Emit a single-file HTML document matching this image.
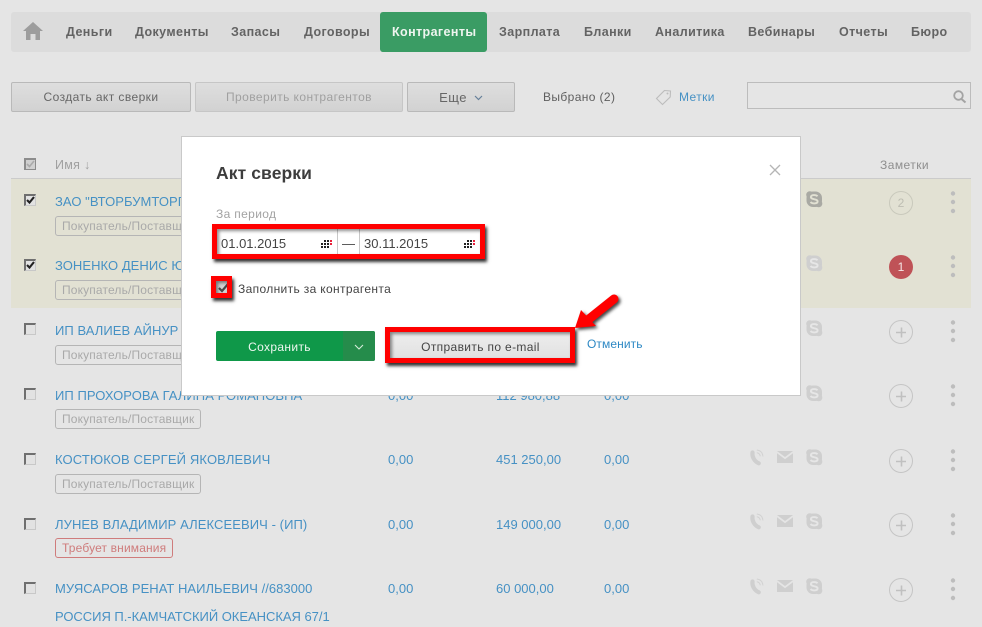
<!DOCTYPE html>
<html lang="ru">
<head>
<meta charset="utf-8">
<style>
html,body{margin:0;padding:0}
body{width:982px;height:627px;overflow:hidden;position:relative;background:#e5e5e5;font-family:"Liberation Sans","DejaVu Sans",sans-serif;font-size:12px;color:#555}
.a,body>div,.modal div{position:absolute;white-space:nowrap}
.nav{left:11px;top:12px;width:960px;height:40px;background:#dcdcdc;border-radius:3px}
.n{top:25px;font-weight:bold;font-size:12.5px;line-height:14px;color:#636363;letter-spacing:.4px}
.active{left:380px;top:12px;width:107px;height:40px;background:#3a9c64;border-radius:3px}
.btn{top:82px;height:30px;box-sizing:border-box;border:1px solid #b9b9b9;border-radius:2px;background:linear-gradient(#dedede,#d2d2d2);text-align:center;line-height:29px;letter-spacing:.42px;color:#666}
.name{left:55px;color:#4691c4;font-size:13px;line-height:15px;letter-spacing:.05px}
.tag{left:55px;height:20px;box-sizing:border-box;border:1px solid #b5b5b5;border-radius:3px;color:#a9a9a9;font-size:12px;line-height:19px;padding:0 6px;letter-spacing:.15px}
.tag.r{border-color:#cf7c7c;color:#cf7c7c}
.amt{color:#4691c4;font-size:13px;line-height:14px;margin-top:1px}
.cb{left:24px;width:12px;height:12px;box-sizing:border-box;border:1px solid #c8c8c8;border-top:2px solid #6f6f6f;border-left:2px solid #6f6f6f;background:#e2e2e2}
.sel{left:11px;top:179px;width:960px;height:129px;background:#e2e1d3}
.line{left:11px;top:178px;width:960px;height:1px;background:#cbcbcb}
.modal{left:181px;top:136px;width:620px;height:260px;box-sizing:border-box;background:#fff;border:1px solid #c9c9c9;z-index:5}
.in{left:1px;top:0;width:0;height:0}
.red{box-sizing:border-box;border:5px solid #f00;box-shadow:2px 3px 3px #333,inset 2px 2px 3px rgba(0,0,0,.45);z-index:7}
svg{display:block;overflow:visible}
</style>
</head>
<body>
<svg width="0" height="0" style="position:absolute">
<defs>
<g id="phone"><path d="M3.500 3.500C2.800 7.500 5.200 12.300 9.800 14.300" fill="none" stroke="#cfcfcf" stroke-width="4.200" stroke-linecap="round"/><path d="M7.800 1c3.500.4 5.800 2.800 6.200 6.500M7.800 3.800c2 .3 3.200 1.500 3.500 3.500" fill="none" stroke="#d2d2d2" stroke-width="1"/></g>
<g id="mail"><path d="M0 0h16L8 6z M0 2.200l8 6 8-6V12H0z" fill="#cfcfcf"/></g>
<g id="sk"><rect x="0.500" y="0.500" width="15.500" height="15.500" rx="6.500" fill="#cfcfcf"/><circle cx="3.800" cy="3.800" r="3.600" fill="#cfcfcf"/><circle cx="12.700" cy="12.700" r="3.600" fill="#cfcfcf"/><path d="M11.500 5.300C10 3.500 5 3.500 4.900 6 4.800 8.900 11.700 7.600 11.600 10.500 11.400 13 6 12.900 4.600 10.900" fill="none" stroke="#e6e6e6" stroke-width="1.900"/></g>
<g id="skd"><rect x="0.500" y="0.500" width="15.500" height="15.500" rx="6.500" fill="#a9a9a3"/><circle cx="3.800" cy="3.800" r="3.600" fill="#a9a9a3"/><circle cx="12.700" cy="12.700" r="3.600" fill="#a9a9a3"/><path d="M11.500 5.300C10 3.500 5 3.500 4.900 6 4.800 8.900 11.700 7.600 11.600 10.500 11.400 13 6 12.900 4.600 10.900" fill="none" stroke="#e2e1d3" stroke-width="1.900"/></g>
<g id="plus"><circle cx="12" cy="12" r="11.500" fill="none" stroke="#c5c5c5" stroke-width="1"/><path d="M7 12.500h10M12.500 7.500v10" stroke="#c0c0c0" stroke-width="1.600"/></g>
<g id="dots"><circle cx="2" cy="2.500" r="2.200" fill="#bdbdbd"/><circle cx="2" cy="11" r="2.200" fill="#bdbdbd"/><circle cx="2" cy="20" r="2.200" fill="#bdbdbd"/></g>
<g id="cal"><path d="M0 2h2v2H0zM3 2h2v2H3zM6 2h2v2H6zM0 5h2v2H0zM3 5h2v2H3zM6 5h2v2H6zM3 -1h2v2H3zM6 -1h2v2H6z" fill="#222"/><path d="M9 -1h2v2H9zM9 2h2v2H9z" fill="#e8203a"/></g>
</defs>
</svg>

<div class="nav"></div>
<div class="active"></div>
<svg class="a" style="left:23px;top:22px" width="20" height="18"><path d="M10 0L20 9h-3v9h-4.500v-6h-5v6H3V9H0z" fill="#9d9d9d"/></svg>
<div class="n" style="left:66px">Деньги</div>
<div class="n" style="left:135px">Документы</div>
<div class="n" style="left:231px">Запасы</div>
<div class="n" style="left:304px">Договоры</div>
<div class="n" style="left:392px;color:#eef5ef">Контрагенты</div>
<div class="n" style="left:499px">Зарплата</div>
<div class="n" style="left:584px">Бланки</div>
<div class="n" style="left:655px">Аналитика</div>
<div class="n" style="left:748px">Вебинары</div>
<div class="n" style="left:839px">Отчеты</div>
<div class="n" style="left:911px">Бюро</div>

<div class="btn" style="left:11px;width:180px">Создать акт сверки</div>
<div class="btn" style="left:195px;width:208px;color:#a0a0a0;border-color:#c6c6c6">Проверить контрагентов</div>
<div class="btn" style="left:407px;width:108px;padding-right:16px;font-size:13px">Еще</div>
<svg class="a" style="left:474px;top:95px" width="9" height="6"><path d="M1 1l3.500 3.500L8 1" fill="none" stroke="#66809a" stroke-width="1.200"/></svg>
<div style="left:543px;top:90px;line-height:14px;color:#5f5f5f;letter-spacing:.38px">Выбрано (2)</div>
<svg class="a" style="left:655px;top:89px" width="17" height="17"><path d="M9.500 1.500l6 .5-.3 6-7.700 7.500-6-6z" fill="none" stroke="#bcbcbc" stroke-width="1.100"/><circle cx="12.500" cy="4.500" r="1" fill="#bcbcbc"/></svg>
<div style="left:679px;top:90px;line-height:14px;color:#4691c4;letter-spacing:.4px">Метки</div>
<div style="left:747px;top:82px;width:224px;height:27px;box-sizing:border-box;border:1px solid #bcbcbc"></div>
<svg class="a" style="left:953px;top:90px" width="14" height="14"><circle cx="5.500" cy="5.500" r="4.300" fill="none" stroke="#a3a3a3" stroke-width="1.800"/><path d="M8.500 9l4 3.500" stroke="#a3a3a3" stroke-width="2"/></svg>

<div class="cb" style="top:158px;background:#d0d0d0;border-color:#8c8c8c"></div>
<svg class="a" style="left:26px;top:160px" width="9" height="8"><path d="M1 4l2.500 2.500L8 1" fill="none" stroke="#aaa" stroke-width="1.600"/></svg>
<div style="left:55px;top:158px;line-height:15px;color:#a0a0a0;letter-spacing:.3px;font-size:12.500px">Имя ↓</div>
<div style="left:880px;top:158px;line-height:15px;color:#8e8e8e;letter-spacing:.45px">Заметки</div>
<div class="line"></div>
<div class="sel"></div>

<!-- checkboxes -->
<div class="cb" style="top:194px"></div>
<svg class="a" style="left:26px;top:196px" width="9" height="8"><path d="M1 4l2.500 2.500L8 1" fill="none" stroke="#222" stroke-width="2.100"/></svg>
<div class="cb" style="top:259px"></div>
<svg class="a" style="left:26px;top:261px" width="9" height="8"><path d="M1 4l2.500 2.500L8 1" fill="none" stroke="#222" stroke-width="2.100"/></svg>
<div class="cb" style="top:323px"></div>
<div class="cb" style="top:388px"></div>
<div class="cb" style="top:453px"></div>
<div class="cb" style="top:518px"></div>
<div class="cb" style="top:582px"></div>

<!-- names -->
<div class="name" style="top:194px">ЗАО "ВТОРБУМТОРГ"</div>
<div class="tag" style="top:216px">Покупатель/Поставщик</div>
<div class="name" style="top:258px">ЗОНЕНКО ДЕНИС ЮРЬЕВИЧ</div>
<div class="tag" style="top:280px">Покупатель/Поставщик</div>
<div class="name" style="top:323px">ИП ВАЛИЕВ АЙНУР</div>
<div class="tag" style="top:345px">Покупатель/Поставщик</div>
<div class="name" style="top:388px">ИП ПРОХОРОВА ГАЛИНА РОМАНОВНА</div>
<div class="tag" style="top:409px">Покупатель/Поставщик</div>
<div class="name" style="top:452px;letter-spacing:.13px">КОСТЮКОВ СЕРГЕЙ ЯКОВЛЕВИЧ</div>
<div class="tag" style="top:474px">Покупатель/Поставщик</div>
<div class="name" style="top:517px;letter-spacing:.08px">ЛУНЕВ ВЛАДИМИР АЛЕКСЕЕВИЧ - (ИП)</div>
<div class="tag r" style="top:538px">Требует внимания</div>
<div class="name" style="top:581px;letter-spacing:.02px">МУЯСАРОВ РЕНАТ НАИЛЬЕВИЧ //683000</div>
<div class="name" style="top:609px;letter-spacing:-.03px">РОССИЯ П.-КАМЧАТСКИЙ ОКЕАНСКАЯ 67/1</div>

<!-- amounts -->
<div class="amt" style="left:388px;top:388px">0,00</div><div class="amt" style="left:496px;top:388px">112 980,88</div><div class="amt" style="left:604px;top:388px">0,00</div>
<div class="amt" style="left:388px;top:452px">0,00</div><div class="amt" style="left:496px;top:452px">451 250,00</div><div class="amt" style="left:604px;top:452px">0,00</div>
<div class="amt" style="left:388px;top:517px">0,00</div><div class="amt" style="left:496px;top:517px">149 000,00</div><div class="amt" style="left:604px;top:517px">0,00</div>
<div class="amt" style="left:388px;top:581px">0,00</div><div class="amt" style="left:496px;top:581px">60 000,00</div><div class="amt" style="left:604px;top:581px">0,00</div>

<!-- row icons -->
<svg class="a" style="left:0;top:0" width="982" height="627">
<g transform="translate(806,191)"><use href="#skd"/></g>
<g transform="translate(806,255)"><use href="#sk"/></g>
<g transform="translate(806,320)"><use href="#sk"/></g>
<g transform="translate(806,385)"><use href="#sk"/></g>
<g transform="translate(749,449)"><use href="#phone"/></g><g transform="translate(777,451)"><use href="#mail"/></g><g transform="translate(806,449)"><use href="#sk"/></g>
<g transform="translate(749,513)"><use href="#phone"/></g><g transform="translate(777,515)"><use href="#mail"/></g><g transform="translate(806,513)"><use href="#sk"/></g>
<g transform="translate(749,578)"><use href="#phone"/></g><g transform="translate(777,580)"><use href="#mail"/></g><g transform="translate(806,578)"><use href="#sk"/></g>
<g transform="translate(889,191)"><circle cx="12" cy="12" r="11.500" fill="none" stroke="#c9c9bc"/></g>
<circle cx="901" cy="267" r="12" fill="#bf5257"/>
<g transform="translate(889,320)"><use href="#plus"/></g>
<g transform="translate(889,384)"><use href="#plus"/></g>
<g transform="translate(889,449)"><use href="#plus"/></g>
<g transform="translate(889,513)"><use href="#plus"/></g>
<g transform="translate(889,578)"><use href="#plus"/></g>
<g transform="translate(951,191)"><use href="#dots"/></g>
<g transform="translate(951,255)"><use href="#dots"/></g>
<g transform="translate(951,320)"><use href="#dots"/></g>
<g transform="translate(951,384)"><use href="#dots"/></g>
<g transform="translate(951,449)"><use href="#dots"/></g>
<g transform="translate(951,513)"><use href="#dots"/></g>
<g transform="translate(951,578)"><use href="#dots"/></g>
</svg>
<div style="left:889px;top:196px;width:24px;text-align:center;line-height:15px;color:#bdbdb2">2</div>
<div style="left:889px;top:260px;width:24px;text-align:center;line-height:15px;color:#f5e6e6">1</div>

<!-- modal -->
<div class="modal"><div class="in">
  <div style="left:33px;top:26px;font-weight:bold;line-height:20px;color:#3d3d3d;letter-spacing:.1px;font-size:17.500px">Акт сверки</div>
  <svg class="a" style="left:586px;top:27px" width="12" height="12"><path d="M1 1l10 10M11 1L1 11" stroke="#b5b5b5" stroke-width="1.300"/></svg>
  <div style="left:33px;top:70px;line-height:15px;color:#a3a3a3;letter-spacing:.35px">За период</div>
  <div style="left:33px;top:91px;width:266px;height:27px;box-sizing:border-box;border:1px solid #c8c8c8"></div>
  <div style="left:154px;top:91px;width:1px;height:27px;background:#c8c8c8"></div>
  <div style="left:176px;top:91px;width:1px;height:27px;background:#c8c8c8"></div>
  <div style="left:38px;top:99px;font-size:13px;line-height:15px;color:#444">01.01.2015</div>
  <div style="left:181px;top:99px;font-size:13px;line-height:15px;color:#444">30.11.2015</div>
  <div style="left:159px;top:99px;font-size:13px;line-height:15px;color:#444">—</div>
  <svg class="a" style="left:138px;top:103px" width="11" height="8"><use href="#cal" y="1"/></svg>
  <svg class="a" style="left:281px;top:103px" width="11" height="8"><use href="#cal" y="1"/></svg>
  <div style="left:32px;top:143px;width:16px;height:16px;box-sizing:border-box;background:#d4d4d4;border:1px solid #aaa"></div>
  <svg class="a" style="left:35px;top:146px" width="11" height="10"><path d="M1 5l3 3 6-7" fill="none" stroke="#4a4a4a" stroke-width="2.200"/></svg>
  <div style="left:55px;top:145px;line-height:15px;color:#444;letter-spacing:.35px">Заполнить за контрагента</div>
  <div style="left:33px;top:194px;width:159px;height:30px;background:#0f9849;border-radius:2px"></div>
  <div style="left:160px;top:194px;width:32px;height:30px;background:#258c4b;border-radius:0 2px 2px 0"></div>
  <svg class="a" style="left:171px;top:207px" width="10" height="6"><path d="M1 1l4 4 4-4" fill="none" stroke="#d5ecd9" stroke-width="1.100"/></svg>
  <div style="left:33px;top:203px;width:127px;text-align:center;line-height:15px;color:#eef7f0;letter-spacing:.35px">Сохранить</div>
  <div style="left:206px;top:194px;width:186px;height:30px;background:linear-gradient(#eee,#e0e0e0)"></div>
  <div style="left:206px;top:203px;width:183px;text-align:center;line-height:15px;color:#444;letter-spacing:.35px">Отправить по e-mail</div>
  <div style="left:404px;top:200px;line-height:15px;color:#2c88c4;letter-spacing:.1px">Отменить</div>
</div></div>

<div class="red" style="left:212px;top:224px;width:273px;height:35px"></div>
<div class="red" style="left:211px;top:276px;width:21px;height:22px"></div>
<div class="red" style="left:385px;top:327px;width:190px;height:36px"></div>
<svg class="a" style="left:0;top:0;z-index:8" width="982" height="627">
<g style="filter:drop-shadow(2px 2px 1.500px #444)">
<path d="M589 319L614 299" fill="none" stroke="#f00" stroke-width="9" stroke-linecap="round"/>
<path d="M575 328L581 310 596 326z" fill="#f00"/>
</g>
</svg>
</body>
</html>
